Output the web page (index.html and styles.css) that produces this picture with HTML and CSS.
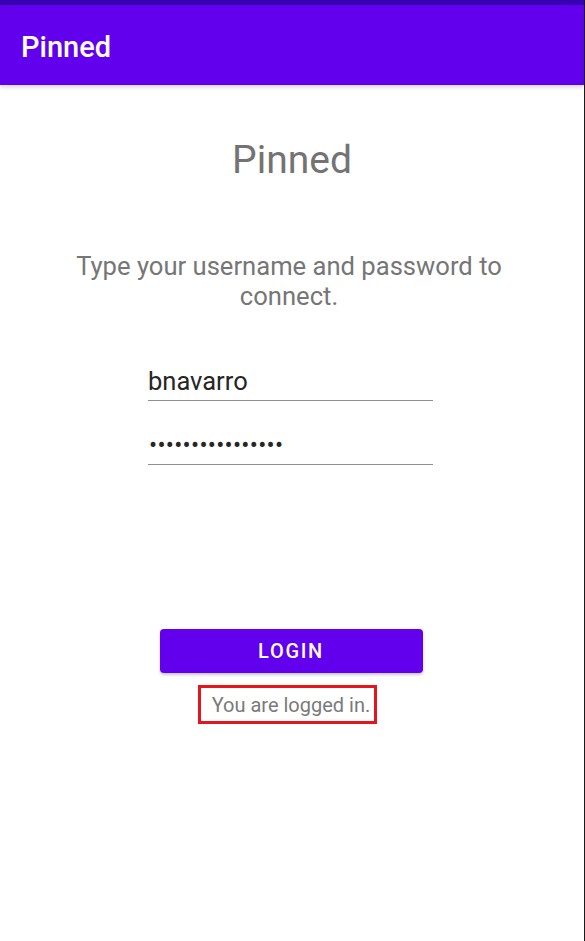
FILE: index.html
```html
<!DOCTYPE html>
<html>
<head>
<meta charset="utf-8">
<link rel="stylesheet" href="styles.css">
</head>
<body>
<div class="screen">
  <div class="status-bar"></div>
  <header class="app-bar"><span class="app-title">Pinned</span></header>
  <main class="content">
    <h1 class="title">Pinned</h1>
    <p class="desc">Type your username and password to connect.</p>
    <div class="field">bnavarro</div>
    <div class="field password">••••••••••••••••</div>
    <button class="login">LOGIN</button>
    <div class="msg-row"><span class="msg">You are logged in.</span></div>
  </main>
</div>
</body>
</html>
```
FILE: styles.css
```css
html, body {
  margin: 0;
  padding: 0;
  background: #ffffff;
}
body {
  font-family: Roboto, "Liberation Sans", sans-serif;
}
.screen {
  width: 584px;
  height: 941px;
  border-right: 1px solid #1a1a1a;
  display: flex;
  flex-direction: column;
  overflow: hidden;
}
.status-bar {
  height: 5px;
  background: #3700b3;
}
.app-bar {
  height: 80px;
  background: #6200ee;
  display: flex;
  align-items: center;
  padding: 4px 0 0 21px;
  box-sizing: border-box;
  box-shadow: 0 2px 4px rgba(0,0,0,0.18);
  position: relative;
  z-index: 1;
}
.app-title {
  color: #ffffff;
  font-size: 29px;
  font-weight: 500;
}
.content {
  display: flex;
  flex-direction: column;
  align-items: center;
}
.title {
  margin: 53px 0 0;
  font-size: 39px;
  line-height: 44px;
  font-weight: 400;
  color: #737373;
}
.desc {
  margin: 69px 0 0 -6px;
  width: 460px;
  text-align: center;
  font-size: 25.6px;
  line-height: 30px;
  color: #767676;
}
.field {
  margin-top: 55px;
  margin-left: -3px;
  width: 285px;
  box-sizing: border-box;
  padding: 0 0 4px 0;
  font-size: 25.5px;
  line-height: 30px;
  color: #262626;
  border-bottom: 1.5px solid #8e8e8e;
}
.field.password {
  margin-top: 29px;
  font-size: 24px;
  letter-spacing: 0.3px;
  padding-left: 1px;
}
.login {
  margin-top: 164px;
  margin-left: -2px;
  width: 263px;
  height: 44px;
  border: none;
  border-radius: 4px;
  background: #6200ee;
  color: #ffffff;
  font-family: Roboto, "Liberation Sans", sans-serif;
  font-size: 20px;
  font-weight: 500;
  letter-spacing: 1.7px;
  box-shadow: 0 2px 3px rgba(0,0,0,0.22);
}
.msg-row {
  margin-top: 12px;
  text-align: center;
  width: 100%;
}
.msg {
  display: inline-block;
  margin-left: -9px;
  border: 3px solid #e8141c;
  padding: 2px 4px 1px 11px;
  font-size: 20px;
  line-height: 30px;
  color: #7a7a7a;
}
```
